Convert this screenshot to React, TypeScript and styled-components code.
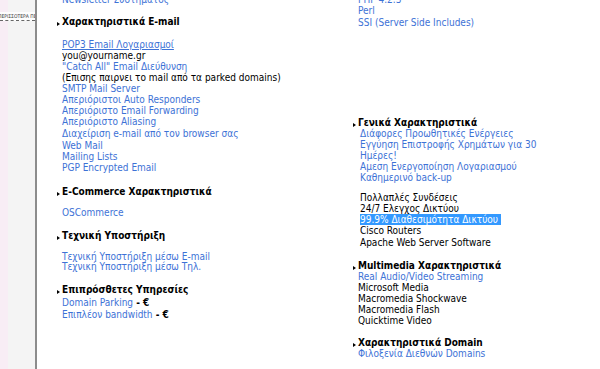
import React from 'react'
import styled, { createGlobalStyle } from 'styled-components'

const GlobalStyle = createGlobalStyle`
  html, body {
    margin: 0;
    padding: 0;
    background: #ffffff;
  }
  body {
    font-family: "DejaVu Sans Condensed", "DejaVu Sans", Verdana, sans-serif;
    font-stretch: semi-condensed;
  }
`;

const Page = styled.div`
  display: flex;
  width: 600px;
  height: 369px;
  overflow: hidden;
  background: #ffffff;
`;

const Sidebar = styled.div`
  width: 35px;
  flex-shrink: 0;
  border-right: 2px solid #8c8c8c;
  background: linear-gradient(to right, #f8edf5 0, #f8edf5 8px, #f4f4f4 8px);
  padding-top: 12px;
`;

const MoreBox = styled.div`
  height: 8px;
  background: #fdfdfd;
  border-bottom: 1px dashed #666666;
  font-size: 5px;
  line-height: 8px;
  color: #333333;
  white-space: nowrap;
  overflow: hidden;
  text-indent: -2px;
`;

const Main = styled.div`
  display: flex;
  padding-left: 20px;
  flex: 1;
`;

const Column = styled.div<{ $width?: number }>`
  width: ${p => (p.$width ? `${p.$width}px` : 'auto')};
  flex-shrink: 0;
  display: flex;
  flex-direction: column;
  align-items: flex-start;
`;

type Kind = 'link' | 'text' | 'head' | 'sel';

const Line = styled.div<{ $kind: Kind; $gap: number; $indent: number; $underline?: boolean }>`
  margin-top: ${p => p.$gap}px;
  padding-left: ${p => (p.$kind === 'head' ? 0 : p.$indent)}px;
  height: 11px;
  line-height: 11px;
  font-size: 10px;
  white-space: nowrap;
  font-weight: ${p => (p.$kind === 'head' ? 700 : 400)};
  color: ${p => (p.$kind === 'link' ? '#3d72d6' : p.$kind === 'sel' ? '#ffffff' : '#000000')};
  text-decoration: ${p => (p.$underline ? 'underline' : 'none')};
`;

const Selected = styled.span`
  display: inline-block;
  background: #3399ff;
  padding-right: 3px;
`;

const Bullet = styled.span<{ $space: number }>`
  display: inline-block;
  width: 0;
  height: 0;
  border-left: 3px solid #000000;
  border-top: 2.5px solid transparent;
  border-bottom: 2.5px solid transparent;
  margin-right: ${p => p.$space}px;
  vertical-align: -1px;
`;

const Price = styled.span`
  color: #000000;
  font-weight: 700;
`;

interface Row {
  text: string;
  kind: Kind;
  gap: number;
  underline?: boolean;
  price?: boolean;
  indent?: number;
}

const leftRows: Row[] = [
  { text: 'Newsletter Συστήματος', kind: 'link', gap: -6 },
  { text: 'Χαρακτηριστικά E-mail', kind: 'head', gap: 11 },
  { text: 'POP3 Email Λογαριασμοί', kind: 'link', gap: 12, underline: true },
  { text: 'you@yourname.gr', kind: 'text', gap: 0 },
  { text: '"Catch All" Email Διεύθυνση', kind: 'link', gap: 0 },
  { text: '(Επισης παιρνει το mail από τα parked domains)', kind: 'text', gap: 0 },
  { text: 'SMTP Mail Server', kind: 'link', gap: 0 },
  { text: 'Απεριόριστοι Auto Responders', kind: 'link', gap: 0 },
  { text: 'Απεριόριστο Email Forwarding', kind: 'link', gap: 0 },
  { text: 'Απεριόριστο Aliasing', kind: 'link', gap: 0 },
  { text: 'Διαχείριση e-mail από τον browser σας', kind: 'link', gap: 1 },
  { text: 'Web Mail', kind: 'link', gap: 1 },
  { text: 'Mailing Lists', kind: 'link', gap: 0 },
  { text: 'PGP Encrypted Email', kind: 'link', gap: 0 },
  { text: 'E-Commerce Χαρακτηριστικά', kind: 'head', gap: 13 },
  { text: 'OSCommerce', kind: 'link', gap: 10 },
  { text: 'Τεχνική Υποστήριξη', kind: 'head', gap: 12 },
  { text: 'Τεχνική Υποστήριξη μέσω E-mail', kind: 'link', gap: 10 },
  { text: 'Τεχνική Υποστήριξη μέσω Τηλ.', kind: 'link', gap: -1 },
  { text: 'Επιπρόσθετες Υπηρεσίες', kind: 'head', gap: 12 },
  { text: 'Domain Parking', kind: 'link', gap: 2, price: true },
  { text: 'Επιπλέον bandwidth', kind: 'link', gap: 1, price: true },
];

const rightRows: Row[] = [
  { text: 'PHP 4.2.3', kind: 'link', gap: -6 },
  { text: 'Perl', kind: 'link', gap: 0 },
  { text: 'SSI (Server Side Includes)', kind: 'link', gap: 1 },
  { text: 'Γενικά Χαρακτηριστικά', kind: 'head', gap: 89 },
  { text: 'Διάφορες Προωθητικές Ενέργειες', kind: 'link', gap: 0, indent: 7 },
  { text: 'Εγγύηση Επιστροφής Χρημάτων για 30', kind: 'link', gap: 0, indent: 7 },
  { text: 'Ημέρες!', kind: 'link', gap: 0, indent: 7 },
  { text: 'Αμεση Ενεργοποίηση Λογαριασμού', kind: 'link', gap: 0, indent: 7 },
  { text: 'Καθημερινό back-up', kind: 'link', gap: 0, indent: 7 },
  { text: 'Πολλαπλές Συνδέσεις', kind: 'text', gap: 9, indent: 7 },
  { text: '24/7 Ελεγχος Δικτύου', kind: 'text', gap: 0, indent: 7 },
  { text: '99.9% Διαθεσιμότητα Δικτύου', kind: 'sel', gap: 0, indent: 7 },
  { text: 'Cisco Routers', kind: 'text', gap: 0, indent: 7 },
  { text: 'Apache Web Server Software', kind: 'text', gap: 1, indent: 7 },
  { text: 'Multimedia Χαρακτηριστικά', kind: 'head', gap: 12 },
  { text: 'Real Audio/Video Streaming', kind: 'link', gap: 0 },
  { text: 'Microsoft Media', kind: 'text', gap: 0 },
  { text: 'Macromedia Shockwave', kind: 'text', gap: 0 },
  { text: 'Macromedia Flash', kind: 'text', gap: 0 },
  { text: 'Quicktime Video', kind: 'text', gap: 0 },
  { text: 'Χαρακτηριστικά Domain', kind: 'head', gap: 11 },
  { text: 'Φιλοξενία Διεθνών Domains', kind: 'link', gap: 0 },
];

function Rows({ rows, indent }: { rows: Row[]; indent: number }) {
  return (
    <>
      {rows.map((r, i) => (
        <Line key={i} $kind={r.kind} $gap={r.gap} $indent={r.indent ?? indent} $underline={r.underline}>
          {r.kind === 'head' && <Bullet $space={indent - 3} />}
          {r.kind === 'sel' ? <Selected>{r.text}</Selected> : r.text}
          {r.price && <Price> - €</Price>}
        </Line>
      ))}
    </>
  );
}

function App() {
  return (
    <>
      <GlobalStyle />
      <Page>
        <Sidebar>
          <MoreBox>ΠΕΡΙΣΣΟΤΕΡΑ ΠΕΡΙΣΣΟΤΕΡΑ</MoreBox>
        </Sidebar>
        <Main>
          <Column $width={296}>
            <Rows rows={leftRows} indent={5} />
          </Column>
          <Column>
            <Rows rows={rightRows} indent={5} />
          </Column>
        </Main>
      </Page>
    </>
  );
}

export default App;
